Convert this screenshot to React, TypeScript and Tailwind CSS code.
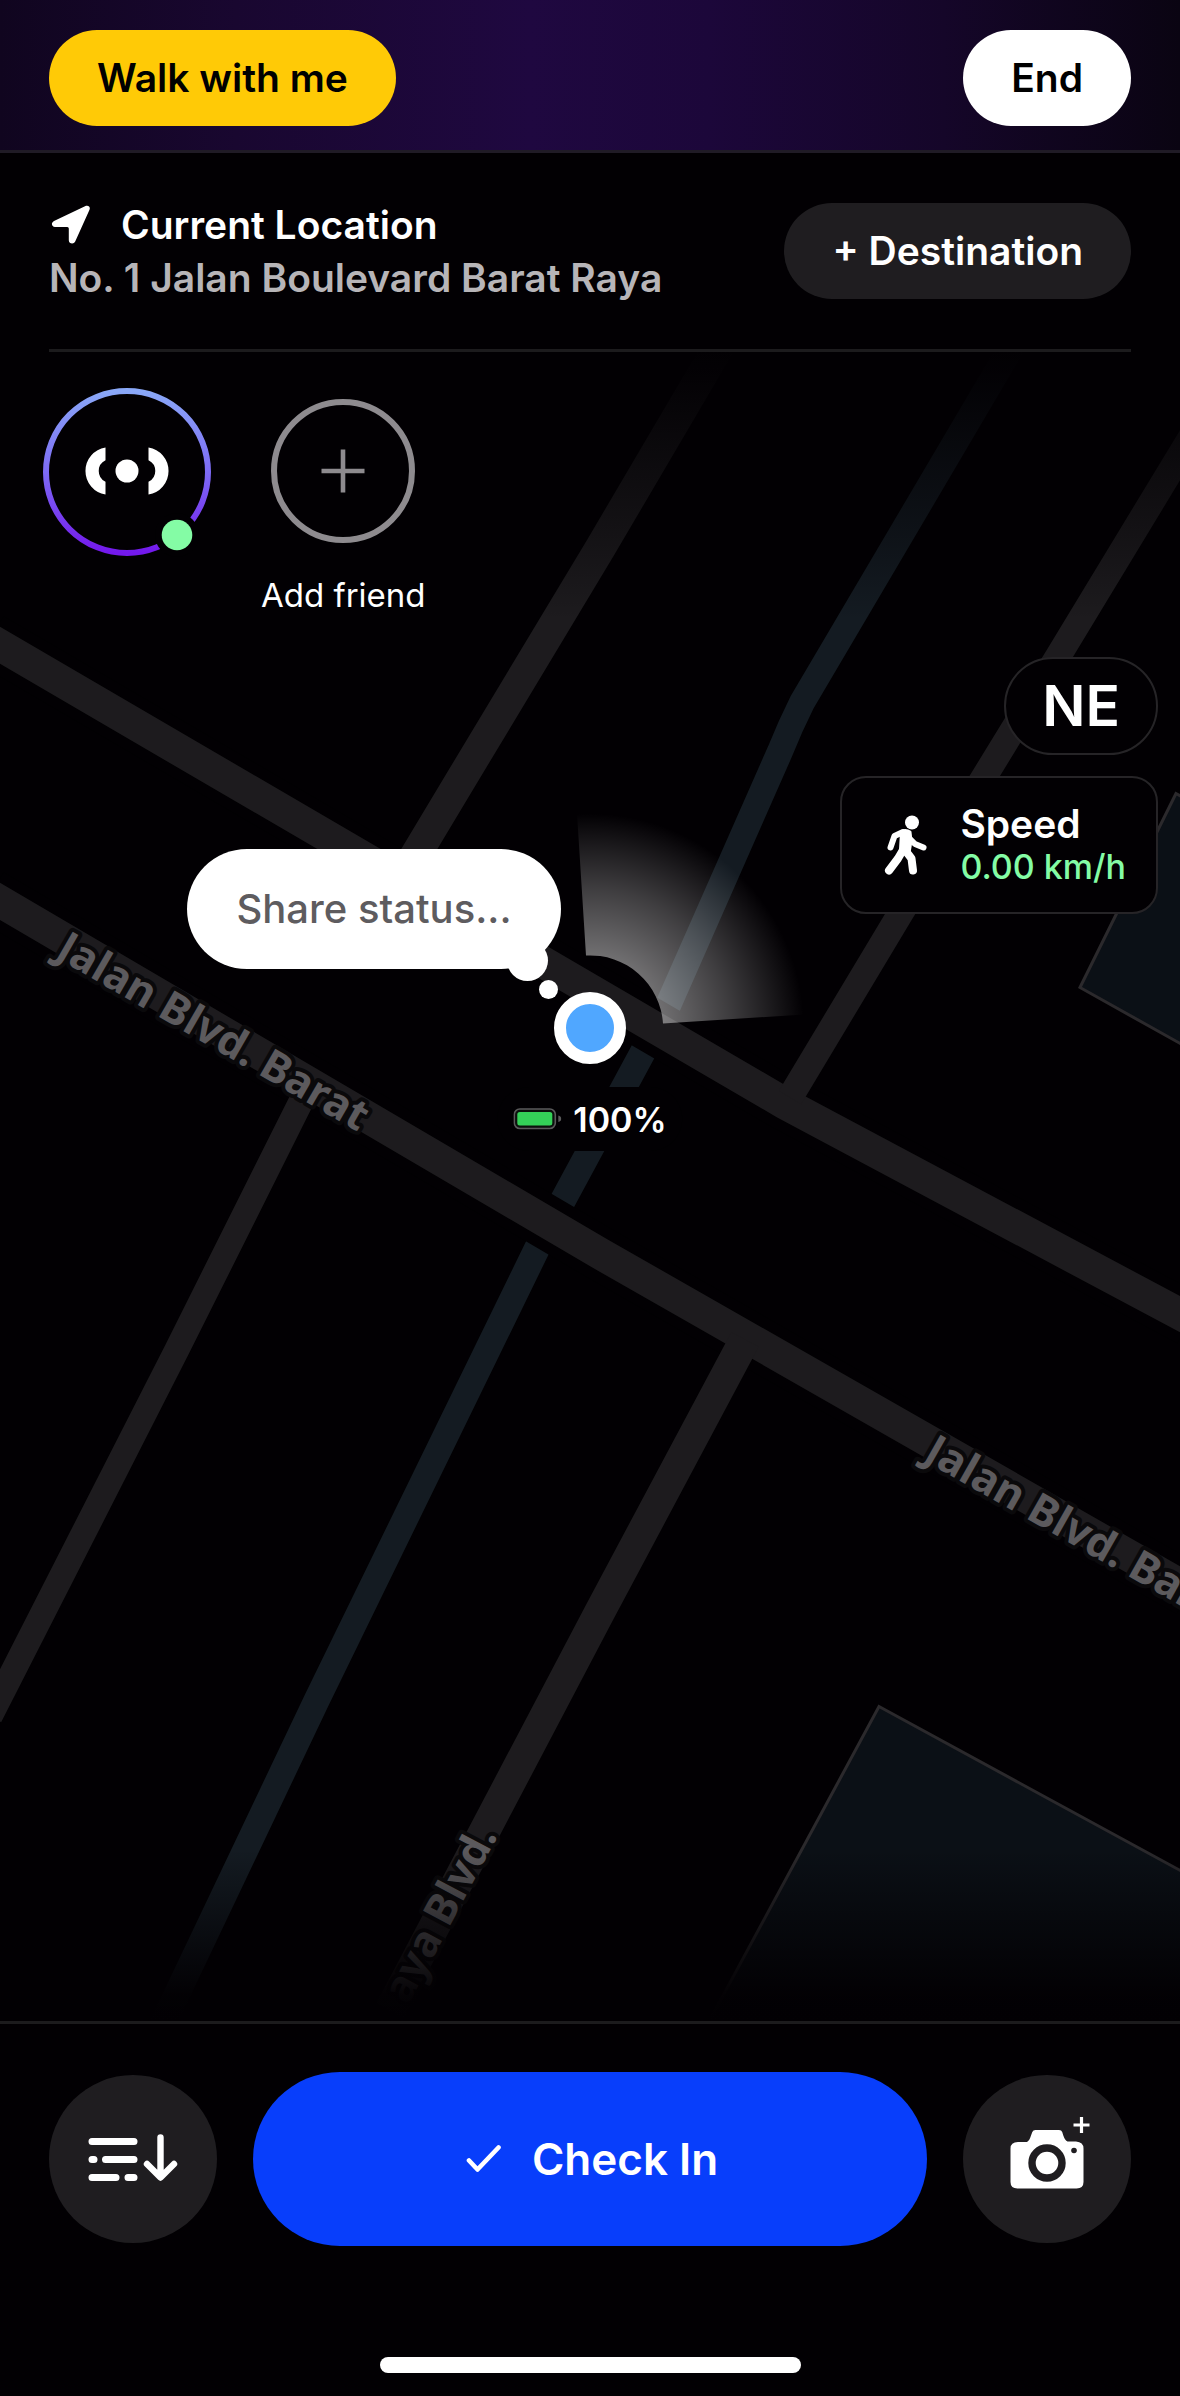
import React from "react";

const roadLabel =
  "fill-[#5c5a5d] stroke-[#0a090b] font-['Noto_Sans','Open_Sans',sans-serif] text-[43px] font-bold [paint-order:stroke] [stroke-linejoin:round] [stroke-width:8px]";

function MapCanvas() {
  return (
    <svg
      className="absolute inset-0 h-full w-full"
      viewBox="0 352 1180 1670"
      preserveAspectRatio="xMidYMid slice"
      role="img"
      aria-label="Street map"
    >
      <defs>
        <linearGradient id="fadeTop" x1="0" y1="0" x2="0" y2="1">
          <stop offset="0" stopColor="#020003" />
          <stop offset="0.08" stopColor="#020003" stopOpacity="0.95" />
          <stop offset="1" stopColor="#020003" stopOpacity="0" />
        </linearGradient>
        <linearGradient id="fadeBottom" x1="0" y1="0" x2="0" y2="1">
          <stop offset="0" stopColor="#020003" stopOpacity="0" />
          <stop offset="0.85" stopColor="#020003" stopOpacity="0.97" />
          <stop offset="1" stopColor="#020003" />
        </linearGradient>
        <radialGradient id="cone" gradientUnits="userSpaceOnUse" cx="590" cy="1028" r="214">
          <stop offset="0.33" stopColor="#fff" stopOpacity="0.44" />
          <stop offset="0.65" stopColor="#fff" stopOpacity="0.24" />
          <stop offset="1" stopColor="#fff" stopOpacity="0" />
        </radialGradient>
      </defs>
      <rect x="0" y="351" width="1180" height="1671" fill="#020003" />

      <g fill="#0b1016" stroke="#2b292c" strokeWidth="3">
        <path d="M1176 794 L1080 988 L1250 1083 L1250 836 Z" />
        <path d="M879 1707 L1250 1909 L1250 2100 L667 2100 Z" />
      </g>

      <path
        d="M1013 345 L802 703 Q790 727 780 752 L668 1006 L538 1247 L317 1700 L160 2030"
        fill="none"
        stroke="#141b22"
        strokeWidth="26"
      />

      <g fill="none" stroke="#020003" strokeWidth="54">
        <path d="M-10 640 L785 1104 L1190 1320" />
        <path d="M-10 896 L600 1254 L1190 1591" />
      </g>
      <g fill="none" stroke="#1d1b1e">
        <path strokeWidth="32" d="M-10 640 L785 1104 L1190 1320" />
        <path strokeWidth="32" d="M-10 896 L600 1254 L1190 1591" />
        <path strokeWidth="31" d="M395 890 L461 780 L600 549 L720 345" />
        <path strokeWidth="26" d="M1195 431 L1058 657 L901 913 L790 1098" />
        <path strokeWidth="25" d="M302 1100 L177 1350 L-10 1717" />
        <path strokeWidth="31" d="M745 1340 L600 1612 L488 1825 L390 2011" />
      </g>

      <text className={roadLabel} transform="translate(54 957) rotate(30)">
        Jalan Blvd. Barat
      </text>
      <text className={roadLabel} transform="translate(922 1460) rotate(29.5)">
        Jalan Blvd. Barat
      </text>
      <text className={roadLabel} textAnchor="end" transform="translate(498 1836) rotate(-62)">
        aya Blvd.
      </text>

      <rect x="0" y="351" width="1180" height="270" fill="url(#fadeTop)" />
      <rect x="0" y="1850" width="1180" height="172" fill="url(#fadeBottom)" />

      <path d="M577 814 A214 214 0 0 1 804 1015 L663 1024 A73 73 0 0 0 586 956 Z" fill="url(#cone)" />
    </svg>
  );
}

function LocationArrow() {
  return (
    <svg className="h-10 w-[42px]" viewBox="0 0 42 40" fill="#fff" aria-hidden="true">
      <path d="M36 1.200 C39.500 -.2 41.800 2 40.400 5 L26.200 36.500 C24.800 39.600 19.800 38.800 19.800 35.200 V23.500 Q19.800 22 18.300 22 H6 C2.500 22 1.700 17.700 5 16 Z" />
    </svg>
  );
}

function SignalAvatar() {
  return (
    <svg className="h-[170px] w-[170px]" viewBox="0 0 170 170" aria-hidden="true">
      <defs>
        <linearGradient id="ring" x1="0" y1="0" x2="0" y2="1">
          <stop offset="0" stopColor="#8aa8f8" />
          <stop offset="0.5" stopColor="#7d6bf5" />
          <stop offset="1" stopColor="#7318ec" />
        </linearGradient>
      </defs>
      <circle cx="85" cy="85" r="81" fill="#020003" stroke="url(#ring)" strokeWidth="6" />
      <circle cx="85" cy="84" r="11.5" fill="#fff" />
      <path fill="#fff" d="M63.5 60.5 A23.8 23.8 0 0 0 63.5 107.5 V94.8 A12 12 0 0 1 63.5 73.2 Z" />
      <path fill="#fff" d="M106.5 60.5 A23.8 23.8 0 0 1 106.5 107.5 V94.8 A12 12 0 0 0 106.5 73.2 Z" />
      <circle cx="135" cy="148" r="22" fill="#020003" />
      <circle cx="135" cy="148" r="15.3" fill="#84fca5" />
    </svg>
  );
}

function Walker() {
  return (
    <svg className="h-[60px] w-11" viewBox="0 0 44 60" aria-hidden="true">
      <circle cx="28" cy="7.5" r="7" fill="#fff" />
      <g fill="none" stroke="#fff" strokeLinecap="round" strokeLinejoin="round">
        <path strokeWidth="6" d="M19 17 L10.500 21 L6.500 32.500" />
        <path strokeWidth="6" d="M26 24 L31 29 L39.500 32.500" />
        <path strokeWidth="8" d="M19 35 L14 43.500 L5 55.500" />
        <path strokeWidth="8" d="M21 35 L27.500 43.500 L29 55.500" />
      </g>
      <path fill="#fff" stroke="#fff" strokeWidth="3" strokeLinejoin="round" d="M17.500 16.500 Q22 14.500 26 17 L27 26 L25 38 L16.500 34.500 Z" />
    </svg>
  );
}

function Battery() {
  return (
    <svg className="h-[22px] w-12" viewBox="0 0 48 22" aria-hidden="true">
      <rect x="1" y="1" width="41" height="19.5" rx="5.5" fill="#0c100d" stroke="#5b5a5c" strokeWidth="1.6" />
      <rect x="4" y="4" width="35" height="13.5" rx="2.5" fill="#34d158" />
      <path d="M45 7.5 Q48 8.3 48 10.8 T45 14 Z" fill="#5b5a5c" />
    </svg>
  );
}

function ListDown() {
  return (
    <svg className="h-[50px] w-[92px]" viewBox="0 0 92 50" fill="none" stroke="#fff" strokeLinecap="round" strokeLinejoin="round" aria-hidden="true">
      <path strokeWidth="7" d="M5 7.5 H47 M5 25.5 H7 M18.5 25.5 H47 M5 43.5 H29 M41 43.5 H47" />
      <path strokeWidth="6.4" d="M73.5 3.500 V43 M60 30 L73.5 43.5 L87 30" />
    </svg>
  );
}

function CameraPlus() {
  return (
    <svg className="h-[92px] w-[92px]" viewBox="0 -1.5 92 92" aria-hidden="true">
      <path
        fill="#fff"
        d="M26 27.5 Q28.5 26 30 21 L31.3 17.6 Q32 15.5 34.5 15.5 H58 Q60.5 15.5 61.2 17.6 L62.3 21 Q64 26 66.5 27 H75 Q82.5 27.5 82.5 34 V67.5 Q82.5 74 75.5 74 H16.5 Q9.5 74 9.5 67.5 V34 Q9.5 27.5 17 27.5 Z"
      />
      <circle cx="46" cy="48.5" r="15" fill="#fff" stroke="#1f1d20" strokeWidth="7.4" />
      <circle cx="73" cy="36" r="2.8" fill="#1f1d20" />
      <path d="M80.500 2.500 V18.500 M72.500 10.500 H88.500" stroke="#fff" strokeWidth="3.2" />
    </svg>
  );
}

const pill = "flex h-24 items-center justify-center rounded-full px-12 text-[39px] font-semibold";

export default function App() {
  return (
    <div className="flex min-h-screen flex-col bg-[#020003] font-['Inter','Liberation_Sans',sans-serif] text-white">
      <header className="flex items-start justify-between border-b-[3px] border-[#201b26] bg-[linear-gradient(90deg,#10051f_0%,#190730_20%,#1f0840_45%,#1c073a_60%,#150629_80%,#0a0412_100%)] px-[49px] pt-[30px] pb-6">
        <button className={`${pill} bg-[#ffca06] text-black`}>Walk with me</button>
        <button className={`${pill} bg-white text-black`}>End</button>
      </header>

      <section className="mx-[49px] flex items-center justify-between border-b-[3px] border-[#1c1b1d] py-[45px]">
        <div className="text-[39px] leading-[53px] font-semibold">
          <h1 className="flex items-center gap-[30px]">
            <LocationArrow />
            Current Location
          </h1>
          <p className="text-[#b7b5b8]">No. 1 Jalan Boulevard Barat Raya</p>
        </div>
        <button className={`${pill} bg-[#1f1d20] text-white`}>+ Destination</button>
      </section>

      <main className="relative flex-1 overflow-hidden">
        <MapCanvas />

        <div className="relative flex items-start gap-[49px] px-[42px] pt-[35px]">
          <button aria-label="My signal, online">
            <SignalAvatar />
          </button>
          <button className="flex flex-col items-center pt-3 text-[33px] leading-10">
            <span className="flex h-36 w-36 items-center justify-center rounded-full border-[6px] border-[#8e8b8f]">
              <svg className="h-11 w-11" viewBox="0 0 44 44" stroke="#8e8b8f" strokeWidth="4.600" aria-hidden="true">
                <path d="M22 .5 V43.500 M.5 22 H43.500" />
              </svg>
            </span>
            <span className="mt-8">Add friend</span>
          </button>
        </div>

        <div className="absolute top-[305px] right-[22px] flex flex-col items-end gap-[21px]">
          <button className="flex h-[98px] items-center rounded-full border-2 border-[#262427] bg-[#020003] px-9 text-[57px] font-semibold">
            NE
          </button>
          <div className="flex h-[138px] items-center gap-8 rounded-[26px] border-2 border-[#262427] bg-[#020003] pr-[30px] pl-[42px]">
            <Walker />
            <div className="font-semibold">
              <p className="text-[39px] leading-[44px]">Speed</p>
              <p className="text-[34px] leading-[42px] font-medium text-[#84fca5]">0.00 km/h</p>
            </div>
          </div>
        </div>

        <div className="absolute top-[676px] left-1/2">
          <button className="absolute right-[29px] bottom-[59px] flex h-[120px] w-[374px] items-center justify-center rounded-full bg-white text-[40px] font-medium whitespace-nowrap text-[#5e5c5f]">
            Share status...
            <span className="absolute right-[13px] -bottom-3 h-[41px] w-[41px] rounded-full bg-white" />
            <span className="absolute right-[3px] -bottom-[30px] h-[19px] w-[19px] rounded-full bg-white" />
          </button>
          <span className="absolute -top-9 -left-9 h-[72px] w-[72px] rounded-full border-[12px] border-white bg-[#50a7ff]" />
          <p className="absolute top-[59px] left-0 flex h-16 -translate-x-1/2 items-center gap-3 rounded-full bg-[#020003] px-4 text-[34px] font-semibold">
            <Battery />
            100%
          </p>
        </div>
      </main>

      <footer className="border-t-[3px] border-[#1c1b1d] px-[49px] pt-12 pb-[23px]">
        <div className="flex items-center gap-9">
          <button aria-label="Activity list" className="flex h-[168px] w-[168px] items-center justify-center rounded-full bg-[#1f1d20]">
            <ListDown />
          </button>
          <button className="flex h-[174px] flex-1 items-center justify-center gap-[30px] rounded-full bg-[#083efb] pl-1 text-[44px] font-semibold">
            <svg className="h-[30px] w-9" viewBox="0 0 36 30" fill="none" stroke="#fff" strokeWidth="4.600" strokeLinecap="round" strokeLinejoin="round" aria-hidden="true">
              <path d="M3 16.500 L11.500 25.500 L32.500 3.500" />
            </svg>
            Check In
          </button>
          <button aria-label="Add photo" className="flex h-[168px] w-[168px] items-center justify-center rounded-full bg-[#1f1d20]">
            <CameraPlus />
          </button>
        </div>
        <div className="mx-auto mt-[111px] h-4 w-[421px] rounded-full bg-white" />
      </footer>
    </div>
  );
}
